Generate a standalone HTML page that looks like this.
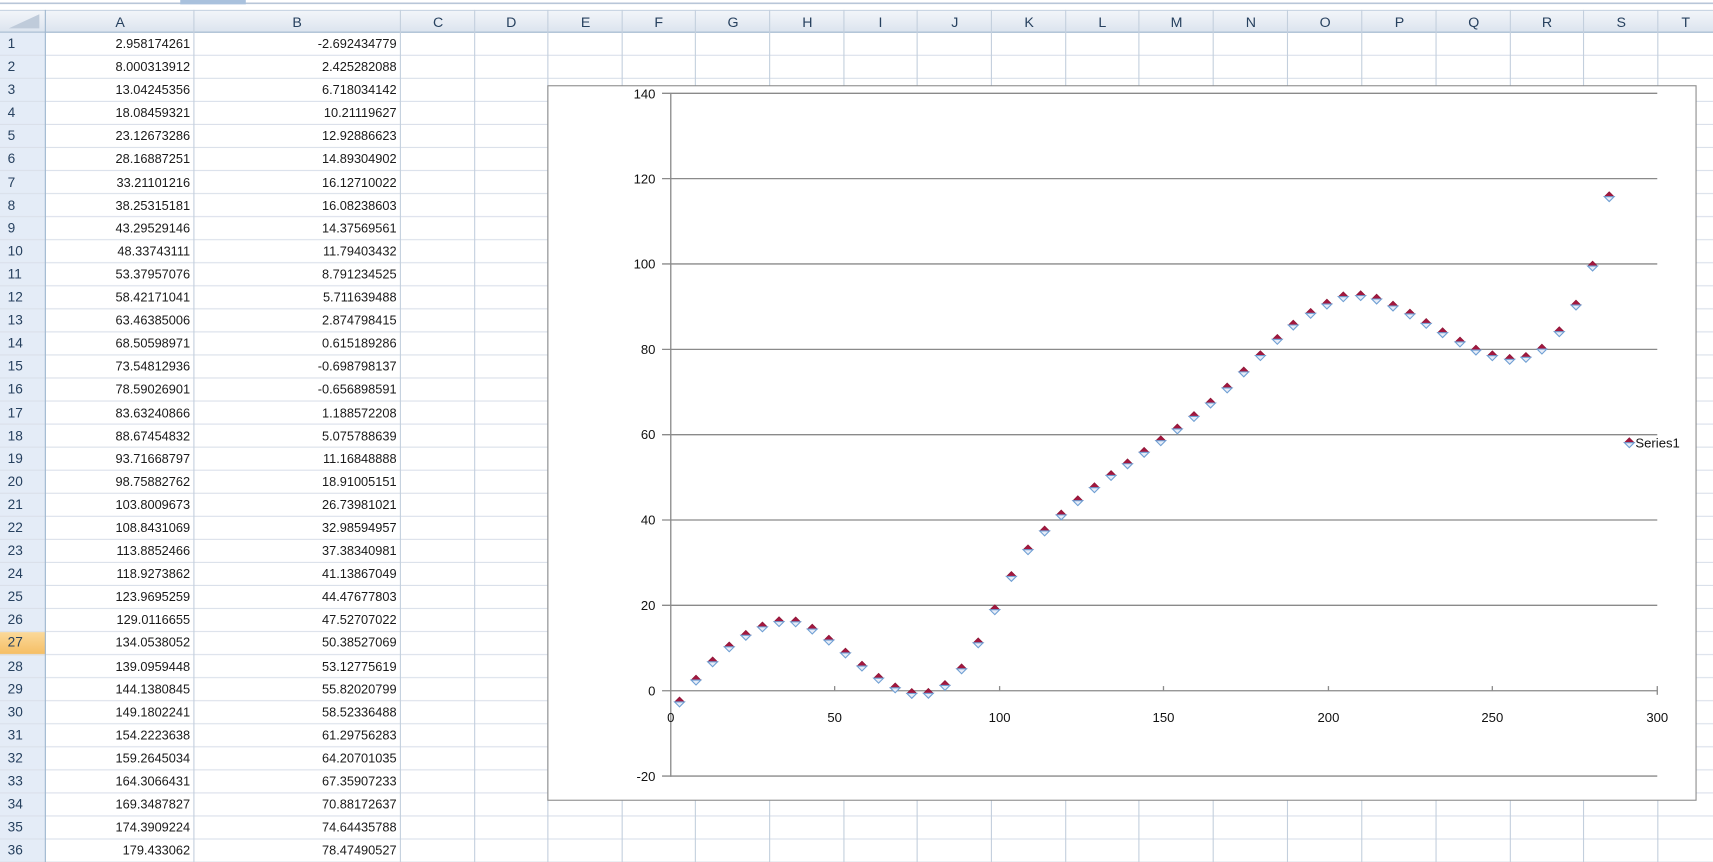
<!DOCTYPE html>
<html><head><meta charset="utf-8"><style>
html,body{margin:0;padding:0;width:1713px;height:862px;overflow:hidden;background:#fff}
#w{position:absolute;left:0;top:0;width:1568px;height:789px;transform:scale(1.09247);transform-origin:0 0;overflow:hidden;font-family:"Liberation Sans",sans-serif}
svg{position:absolute;left:0;top:0}
.rows{position:absolute;left:0;top:30px}
.r{height:21.1px;display:flex;font-size:11.7px;line-height:21px;color:#1a1a1a}
.r i{font-style:normal;width:42px;text-align:left;padding-left:7px;box-sizing:border-box;color:#27415f;font-size:12.5px}
.r b{font-weight:normal;text-align:right;padding-right:4px;box-sizing:border-box}
.r b:nth-of-type(1){width:136px}
.r b:nth-of-type(2){width:189px}
</style></head><body><div id="w">
<svg width="1568" height="789" viewBox="0 0 1568 789">
<defs>
<linearGradient id="hg" x1="0" y1="0" x2="0" y2="1"><stop offset="0" stop-color="#f3f6fa"/><stop offset="1" stop-color="#dbe3ee"/></linearGradient>
<linearGradient id="og" x1="0" y1="0" x2="0" y2="1"><stop offset="0" stop-color="#fbd99a"/><stop offset="1" stop-color="#f5bd62"/></linearGradient>
<pattern id="rowp" x="0" y="30" width="1568" height="21.1" patternUnits="userSpaceOnUse"><line x1="0" y1="20.6" x2="1568" y2="20.6" stroke="#dae0ea" stroke-width="1"/></pattern>
<g id="m"><path d="M0 -4.5 L4.5 0 L-4.5 0 Z" fill="#a3173f" stroke="#8a1536" stroke-width="0.6"/><path d="M-4.5 0 L4.5 0 L0 4.5 Z" fill="#e6ecf8" stroke="#6f9fd3" stroke-width="1"/></g>
</defs>
<rect x="0" y="0" width="1568" height="9" fill="#fff"/>
<line x1="0" y1="3" x2="1568" y2="3" stroke="#b8c6d8" stroke-width="1.5"/>
<rect x="165" y="0" width="60" height="4" fill="#a9c1dd"/>
<rect x="0" y="9" width="1568" height="21" fill="url(#hg)"/>
<line x1="0" y1="29.5" x2="1568" y2="29.5" stroke="#9eb6ce"/>
<line x1="0" y1="9.5" x2="1568" y2="9.5" stroke="#c5d2e0"/>
<rect x="0" y="30" width="42" height="760" fill="#e4ecf7"/>
<rect x="0" y="578.6" width="42" height="21.1" fill="url(#og)"/>
<rect x="0" y="30" width="1568" height="760" fill="url(#rowp)"/>
<g stroke="#c3cfdd">
<line x1="41.5" y1="9" x2="41.5" y2="789" stroke="#9eb6ce"/>
<line x1="177.5" y1="9" x2="177.5" y2="789"/><line x1="366.5" y1="9" x2="366.5" y2="789"/><line x1="434.5" y1="9" x2="434.5" y2="789"/><line x1="501.5" y1="9" x2="501.5" y2="789"/><line x1="569.5" y1="9" x2="569.5" y2="789"/><line x1="636.5" y1="9" x2="636.5" y2="789"/><line x1="704.5" y1="9" x2="704.5" y2="789"/><line x1="772.5" y1="9" x2="772.5" y2="789"/><line x1="839.5" y1="9" x2="839.5" y2="789"/><line x1="907.5" y1="9" x2="907.5" y2="789"/><line x1="975.5" y1="9" x2="975.5" y2="789"/><line x1="1042.5" y1="9" x2="1042.5" y2="789"/><line x1="1110.5" y1="9" x2="1110.5" y2="789"/><line x1="1178.5" y1="9" x2="1178.5" y2="789"/><line x1="1246.5" y1="9" x2="1246.5" y2="789"/><line x1="1314.5" y1="9" x2="1314.5" y2="789"/><line x1="1382.5" y1="9" x2="1382.5" y2="789"/><line x1="1449.5" y1="9" x2="1449.5" y2="789"/><line x1="1517.5" y1="9" x2="1517.5" y2="789"/>
</g>
<path d="M8 26 L36 26 L36 13 Z" fill="#bfcbda"/>
<g font-size="13" fill="#27415f" text-anchor="middle" font-family="Liberation Sans,sans-serif">
<text x="110" y="24.5">A</text><text x="272" y="24.5">B</text><text x="401" y="24.5">C</text><text x="468" y="24.5">D</text><text x="536" y="24.5">E</text><text x="603" y="24.5">F</text><text x="671" y="24.5">G</text><text x="739" y="24.5">H</text><text x="806" y="24.5">I</text><text x="874" y="24.5">J</text><text x="942" y="24.5">K</text><text x="1009" y="24.5">L</text><text x="1077" y="24.5">M</text><text x="1145" y="24.5">N</text><text x="1213" y="24.5">O</text><text x="1281" y="24.5">P</text><text x="1349" y="24.5">Q</text><text x="1416" y="24.5">R</text><text x="1484" y="24.5">S</text><text x="1543" y="24.5">T</text>
</g>
<rect x="501.5" y="78.5" width="1051" height="654" fill="#fff" stroke="#8c8c8c" stroke-width="1"/>
<g stroke="#8a8a8a" stroke-width="1.2">
<line x1="606" y1="85.4" x2="1517" y2="85.4"/><line x1="606" y1="163.5" x2="1517" y2="163.5"/><line x1="606" y1="241.6" x2="1517" y2="241.6"/><line x1="606" y1="319.8" x2="1517" y2="319.8"/><line x1="606" y1="397.9" x2="1517" y2="397.9"/><line x1="606" y1="476" x2="1517" y2="476"/><line x1="606" y1="554.1" x2="1517" y2="554.1"/><line x1="606" y1="632.3" x2="1517" y2="632.3"/><line x1="606" y1="710.4" x2="1517" y2="710.4"/>
<line x1="614" y1="85" x2="614" y2="711"/>
<line x1="764" y1="628" x2="764" y2="632"/><line x1="915" y1="628" x2="915" y2="632"/><line x1="1065" y1="628" x2="1065" y2="632"/><line x1="1216" y1="628" x2="1216" y2="632"/><line x1="1366" y1="628" x2="1366" y2="632"/><line x1="1517" y1="628" x2="1517" y2="636"/>
</g>
<g font-size="12" fill="#111" text-anchor="end" font-family="Liberation Sans,sans-serif">
<text x="600" y="90">140</text><text x="600" y="168">120</text><text x="600" y="246">100</text><text x="600" y="324">80</text><text x="600" y="402">60</text><text x="600" y="480">40</text><text x="600" y="558.5">20</text><text x="600" y="636.5">0</text><text x="600" y="715">-20</text>
</g>
<g font-size="12" fill="#111" text-anchor="middle" font-family="Liberation Sans,sans-serif">
<text x="614" y="661">0</text><text x="764" y="661">50</text><text x="915" y="661">100</text><text x="1065" y="661">150</text><text x="1216" y="661">200</text><text x="1366" y="661">250</text><text x="1517" y="661">300</text>
</g>
<g>
<use href="#m" x="622" y="642.5"/><use href="#m" x="637.1" y="622.5"/><use href="#m" x="652.3" y="605.8"/><use href="#m" x="667.5" y="592.1"/><use href="#m" x="682.7" y="581.5"/><use href="#m" x="697.9" y="573.8"/><use href="#m" x="713.1" y="569"/><use href="#m" x="728.3" y="569.2"/><use href="#m" x="743.5" y="575.8"/><use href="#m" x="758.7" y="585.9"/><use href="#m" x="773.9" y="597.7"/><use href="#m" x="789" y="609.7"/><use href="#m" x="804.2" y="620.8"/><use href="#m" x="819.4" y="629.6"/><use href="#m" x="834.6" y="634.7"/><use href="#m" x="849.8" y="634.6"/><use href="#m" x="865" y="627.4"/><use href="#m" x="880.2" y="612.2"/><use href="#m" x="895.4" y="588.4"/><use href="#m" x="910.6" y="558.1"/><use href="#m" x="925.8" y="527.6"/><use href="#m" x="941" y="503.2"/><use href="#m" x="956.2" y="486"/><use href="#m" x="971.4" y="471.3"/><use href="#m" x="986.6" y="458.3"/><use href="#m" x="1001.8" y="446.4"/><use href="#m" x="1017" y="435.2"/><use href="#m" x="1032.1" y="424.5"/><use href="#m" x="1047.3" y="414"/><use href="#m" x="1062.5" y="403.4"/><use href="#m" x="1077.7" y="392.6"/><use href="#m" x="1092.9" y="381.2"/><use href="#m" x="1108.1" y="368.9"/><use href="#m" x="1123.3" y="355.1"/><use href="#m" x="1138.5" y="340.4"/><use href="#m" x="1153.7" y="325.5"/>
<use href="#m" x="1169.2" y="310.6"/><use href="#m" x="1183.8" y="297.5"/><use href="#m" x="1199.7" y="286.8"/><use href="#m" x="1214.6" y="278.3"/><use href="#m" x="1229.6" y="271.6"/><use href="#m" x="1245.5" y="270.6"/><use href="#m" x="1260.1" y="273.7"/><use href="#m" x="1275.1" y="280.1"/><use href="#m" x="1290.6" y="287.4"/><use href="#m" x="1305.5" y="296"/><use href="#m" x="1320.5" y="304.5"/><use href="#m" x="1336.4" y="313"/><use href="#m" x="1351" y="320.4"/><use href="#m" x="1366" y="325.6"/><use href="#m" x="1381.9" y="328.9"/><use href="#m" x="1396.8" y="327.1"/><use href="#m" x="1411.4" y="319.5"/><use href="#m" x="1427.3" y="303.6"/><use href="#m" x="1442.6" y="279.2"/><use href="#m" x="1457.8" y="243.5"/><use href="#m" x="1473" y="180"/>
<use href="#m" x="1491.4" y="405.2"/>
</g>
<text x="1497" y="409.5" font-size="12" fill="#111" font-family="Liberation Sans,sans-serif">Series1</text>
</svg>
<div class="rows">
<div class="r"><i>1</i><b>2.958174261</b><b>-2.692434779</b></div>
<div class="r"><i>2</i><b>8.000313912</b><b>2.425282088</b></div>
<div class="r"><i>3</i><b>13.04245356</b><b>6.718034142</b></div>
<div class="r"><i>4</i><b>18.08459321</b><b>10.21119627</b></div>
<div class="r"><i>5</i><b>23.12673286</b><b>12.92886623</b></div>
<div class="r"><i>6</i><b>28.16887251</b><b>14.89304902</b></div>
<div class="r"><i>7</i><b>33.21101216</b><b>16.12710022</b></div>
<div class="r"><i>8</i><b>38.25315181</b><b>16.08238603</b></div>
<div class="r"><i>9</i><b>43.29529146</b><b>14.37569561</b></div>
<div class="r"><i>10</i><b>48.33743111</b><b>11.79403432</b></div>
<div class="r"><i>11</i><b>53.37957076</b><b>8.791234525</b></div>
<div class="r"><i>12</i><b>58.42171041</b><b>5.711639488</b></div>
<div class="r"><i>13</i><b>63.46385006</b><b>2.874798415</b></div>
<div class="r"><i>14</i><b>68.50598971</b><b>0.615189286</b></div>
<div class="r"><i>15</i><b>73.54812936</b><b>-0.698798137</b></div>
<div class="r"><i>16</i><b>78.59026901</b><b>-0.656898591</b></div>
<div class="r"><i>17</i><b>83.63240866</b><b>1.188572208</b></div>
<div class="r"><i>18</i><b>88.67454832</b><b>5.075788639</b></div>
<div class="r"><i>19</i><b>93.71668797</b><b>11.16848888</b></div>
<div class="r"><i>20</i><b>98.75882762</b><b>18.91005151</b></div>
<div class="r"><i>21</i><b>103.8009673</b><b>26.73981021</b></div>
<div class="r"><i>22</i><b>108.8431069</b><b>32.98594957</b></div>
<div class="r"><i>23</i><b>113.8852466</b><b>37.38340981</b></div>
<div class="r"><i>24</i><b>118.9273862</b><b>41.13867049</b></div>
<div class="r"><i>25</i><b>123.9695259</b><b>44.47677803</b></div>
<div class="r"><i>26</i><b>129.0116655</b><b>47.52707022</b></div>
<div class="r"><i>27</i><b>134.0538052</b><b>50.38527069</b></div>
<div class="r"><i>28</i><b>139.0959448</b><b>53.12775619</b></div>
<div class="r"><i>29</i><b>144.1380845</b><b>55.82020799</b></div>
<div class="r"><i>30</i><b>149.1802241</b><b>58.52336488</b></div>
<div class="r"><i>31</i><b>154.2223638</b><b>61.29756283</b></div>
<div class="r"><i>32</i><b>159.2645034</b><b>64.20701035</b></div>
<div class="r"><i>33</i><b>164.3066431</b><b>67.35907233</b></div>
<div class="r"><i>34</i><b>169.3487827</b><b>70.88172637</b></div>
<div class="r"><i>35</i><b>174.3909224</b><b>74.64435788</b></div>
<div class="r"><i>36</i><b>179.433062</b><b>78.47490527</b></div>
</div>
</div></body></html>
